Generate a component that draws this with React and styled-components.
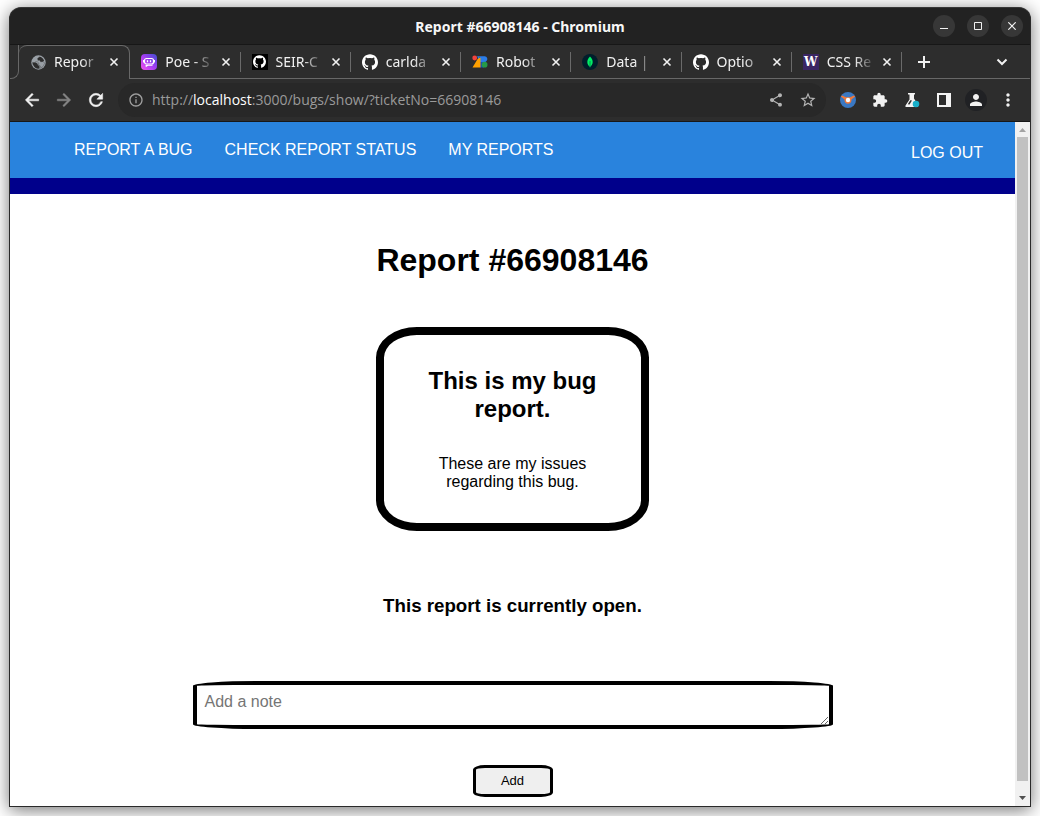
import React from "react";
import styled, { createGlobalStyle, css } from "styled-components";
import {
  MdArrowBack,
  MdArrowForward,
  MdRefresh,
  MdInfoOutline,
  MdShare,
  MdStarBorder,
  MdExtension,
  MdPerson,
  MdMoreVert,
} from "react-icons/md";
import { SiGithub } from "react-icons/si";

const GlobalStyle = createGlobalStyle`
  *, *::before, *::after { box-sizing: border-box; }
  body { margin: 0; background: #fff; }
  h1, h2, h3, p { margin: 0; }
  svg { display: block; flex: none; }
`;

const chromeFont = css`
  font-family: "Noto Sans", "Open Sans", sans-serif;
`;

const Desktop = styled.div`
  display: flex;
  min-height: 100vh;
  padding: 7px 9px 9px;
`;

const Window = styled.div`
  flex: 1;
  min-width: 0;
  display: flex;
  flex-direction: column;
  border: 1px solid #2a2a2a;
  border-top-color: #383838;
  border-radius: 12px 12px 0 0;
  background: #2d2d2d;
  box-shadow: 0 3px 18px rgba(0, 0, 0, 0.55);
  overflow: hidden;
`;

const TitleBar = styled.header`
  display: grid;
  grid-template-columns: 1fr auto 1fr;
  align-items: center;
  height: 37px;
  padding: 0 7px;
  background: #222;
  border-bottom: 1px solid #171717;
`;

const WindowTitle = styled.div`
  ${chromeFont}
  grid-column: 2;
  padding-top: 2px;
  font-size: 14px;
  font-weight: 700;
  line-height: 20px;
  color: #f7f7f7;
`;

const WindowControls = styled.div`
  display: flex;
  justify-content: flex-end;
  gap: 12px;
`;

const IconButton = styled.button`
  display: flex;
  align-items: center;
  justify-content: center;
  flex: none;
  width: ${(p) => p.$size || 32}px;
  height: ${(p) => p.$size || 32}px;
  padding: 0;
  border: 0;
  border-radius: 50%;
  background: ${(p) => p.$bg || "transparent"};
  color: ${(p) => p.$color || "#f1f1f1"};
`;

const TabStrip = styled.div`
  display: flex;
  height: 34px;
`;

const StripEdge = styled.div`
  flex: none;
  width: 9px;
  border-bottom: 1px solid #686868;
  border-right: 1px solid #686868;
  border-bottom-right-radius: 8px;
`;

const Tabs = styled.div`
  flex: 1;
  min-width: 0;
  display: flex;
`;

const Tab = styled.div`
  ${chromeFont}
  flex: 1 1 0;
  min-width: 0;
  display: flex;
  align-items: center;
  padding: 0 5px 0 11px;
  font-size: 14px;
  line-height: 20px;
  color: #f1f1f1;
  ${(p) =>
    p.$active
      ? css`
          border: solid #686868;
          border-width: 1px 1px 0 0;
          border-radius: 8px 8px 0 0;
          padding-bottom: 1px;
        `
      : css`
          border-bottom: 1px solid #686868;
          background: linear-gradient(#6a6a6a, #6a6a6a) no-repeat right center / 1px 20px;
        `}
`;

const TabTitle = styled.span`
  flex: 1;
  min-width: 0;
  margin: 0 0 0 8px;
  white-space: nowrap;
  mask-image: linear-gradient(to right, #000 55%, transparent 96%);
`;

const Favicon = styled.span`
  display: flex;
  align-items: center;
  justify-content: center;
  flex: none;
  width: 16px;
  height: 16px;
  background: ${(p) => p.$bg || "transparent"};
  color: #fff;
  font: 900 12px/16px "DejaVu Serif", serif;
`;

const StripTail = styled.div`
  flex: none;
  display: flex;
  align-items: center;
  justify-content: space-between;
  width: 128px;
  padding: 0 12px 0 6px;
  border-bottom: 1px solid #686868;
`;

const Toolbar = styled.div`
  display: flex;
  align-items: center;
  height: 43px;
  padding: 0 6px;
  border-bottom: 1px solid #171717;
`;

const NavIcons = styled.div`
  display: flex;

  path:not([fill="none"]) {
    stroke: currentColor;
    stroke-width: 0.6;
  }
`;

const Omnibox = styled.div`
  flex: 1;
  min-width: 0;
  display: flex;
  align-items: center;
  height: 34px;
  margin: 0 6px;
  padding: 0 2px;
  border-radius: 17px;
  background: #282828;
`;

const Address = styled.div`
  flex: 1;
  min-width: 0;
  overflow: hidden;
  white-space: nowrap;
  font-family: "Open Sans", "Noto Sans", sans-serif;
  font-size: 14px;
  line-height: 20px;
  color: #9a9a9a;
  outline: 0;

  span { color: #fff; }
`;

const Avatar = styled.span`
  display: flex;
  align-items: center;
  justify-content: center;
  width: 22px;
  height: 22px;
  border-radius: 50%;
  background: #202124;
`;

const Viewport = styled.div`
  flex: 1;
  display: flex;
  background: #fff;
`;

const Page = styled.div`
  flex: 1;
  min-width: 0;
  padding-bottom: 9px;
  font-family: "Liberation Sans", Arial, sans-serif;
  color: #000;
`;

const Nav = styled.nav`
  display: flex;
  justify-content: space-between;
  height: 72px;
  padding: 0 32px 0 64px;
  background: #2983dd;
  border-bottom: 16px solid #00008b;
`;

const NavLinks = styled.div`
  display: flex;
  align-items: center;
  gap: 32px;
  height: 56px;
`;

const NavLink = styled.a`
  font-size: 16px;
  line-height: 18px;
  color: #fff;
  text-decoration: none;
  white-space: nowrap;
`;

const LogOut = styled.div`
  display: flex;
  align-items: flex-end;
  height: 40px;
`;

const Main = styled.main`
  display: flex;
  flex-direction: column;
  align-items: center;
  padding-top: 48px;
  text-align: center;
`;

const Heading = styled.h1`
  margin-bottom: 48px;
  font-size: 32px;
  line-height: 37px;
`;

const Card = styled.article`
  display: grid;
  gap: 32px;
  width: 273px;
  margin-bottom: 64px;
  padding: 32px;
  border: 8px solid #000;
  border-radius: 15%;
`;

const CardTitle = styled.h2`
  font-size: 24px;
  line-height: 28px;
`;

const CardText = styled.p`
  padding: 0 16px;
  font-size: 16px;
  line-height: 18px;
`;

const Status = styled.h3`
  margin-bottom: 64px;
  line-height: 22px;
`;

const NoteForm = styled.form`
  display: flex;
  flex-direction: column;
  align-items: center;
  gap: 36px;
  width: 100%;
`;

const NoteField = styled.textarea`
  display: block;
  width: 640px;
  max-width: 100%;
  height: 48px;
  padding: 8px;
  border: 4px solid #000;
  border-radius: 10%;
  background: #fff;
  font: 16px/18px "Liberation Sans", Arial, sans-serif;
  overflow: auto;

  &::placeholder { color: #757575; }
`;

const AddButton = styled.button`
  width: 80px;
  height: 32px;
  padding: 0 0 2px;
  border: 3px solid #000;
  border-radius: 15%;
  background: #efefef;
  color: #000;
  font: 13px/15px "Liberation Sans", Arial, sans-serif;
`;

const ScrollTrack = styled.div`
  flex: none;
  display: flex;
  flex-direction: column;
  width: 15px;
  background: #f1f1f1;
`;

const ScrollArrow = styled.div`
  display: flex;
  align-items: center;
  justify-content: center;
  height: 15px;
  color: ${(p) => p.$color};
`;

const ScrollThumb = styled.div`
  flex: 1;
  margin: 0 2px;
  background: #c1c1c1;
`;

const ScrollEnd = styled.div`
  height: 25px;
  padding-top: 9px;
`;

const GlobeIcon = () => (
  <svg width="15" height="15" viewBox="0 0 15 15">
    <circle cx="7.500" cy="7.500" r="7.200" fill="#9aa0a6" />
    <path d="M8.500 1.800 6.800 3.200 7.500 5l1.700.3.600 1.500 2-.3 1.400.8.300 1.200-1.500 3-2 1.500-.5-2-2-1.200.300-1.800L6 6.500 4.300 6.800l-1 1.200-1.800-.5.2 2 2.300.5 1.200 1.500-.2 1.200 1.500.6L8 12.500l1.500.5L8.500 14" fill="none" stroke="#2d2d2d" strokeWidth=".3" />
    <path d="M8.800 1.700c2.200.5 3.800 2.100 4.300 4.100l-1.600.9-2 .1-.7-1.500-2 .1-.3-2zM1.600 7.400l3.200.2 1.800 1.200.3 1.500 1.600.5-.2 2.800c-3.500.4-6.400-2.200-6.700-6.200z" fill="#2d2d2d" />
  </svg>
);

const PoeIcon = () => (
  <svg width="16" height="16" viewBox="0 0 16 16">
    <defs>
      <linearGradient id="poe" x1="0" y1="1" x2="1" y2="0">
        <stop offset="0" stopColor="#f655f0" />
        <stop offset=".5" stopColor="#a43cf2" />
        <stop offset="1" stopColor="#3f4fd0" />
      </linearGradient>
    </defs>
    <rect width="16" height="16" rx="4" fill="url(#poe)" />
    <rect x="3.500" y="4.500" width="9" height="5.500" rx="2" fill="none" stroke="#fff" strokeWidth="1.200" />
    <path d="M2.500 6v2.500M13.500 6v2.500" stroke="#fff" strokeWidth="1" />
    <path d="M4.500 10.800h7v1H7l-2.200 1.500z" fill="#fff" />
    <path d="M6.500 6.300v1.900M9.500 6.300v1.900" stroke="#fff" strokeWidth="1.300" />
  </svg>
);

const RoboticsIcon = () => (
  <svg width="16" height="16" viewBox="0 0 16 16">
    <path d="M7.500 2.300h5a2.800 2.800 0 0 1 1.500 5.200L12 9H8z" fill="#2b7de9" />
    <path d="M8 8h4v5.500H8z" fill="#1b4fb4" />
    <path d="M.5 13.500 6.500 3.500 8.500 4v9.500z" fill="#ffa000" />
    <path d="M5 2.300h3L6.500 5z" fill="#2b7de9" />
    <circle cx="2.700" cy="4" r="2.400" fill="#f4433c" />
    <circle cx="12.600" cy="10.700" r="2.900" fill="#249a48" />
  </svg>
);

const MongoIcon = () => (
  <svg width="16" height="16" viewBox="0 0 16 16">
    <circle cx="8" cy="8" r="8" fill="#001e2b" />
    <path d="M8 2.500c1.600 1.800 2.700 3.400 2.700 5.400S9.600 11.600 8 13c-1.600-1.400-2.700-3.100-2.700-5.100S6.400 4.300 8 2.500z" fill="#00ed64" />
    <path d="M8 7v6.500" stroke="#067a48" strokeWidth=".8" />
  </svg>
);

const CloseIcon = () => (
  <svg width="10" height="10" viewBox="0 0 10 10" stroke="currentColor" strokeWidth="1.600">
    <path d="M1.500 1.500l7 7M8.500 1.500l-7 7" />
  </svg>
);

const PlusIcon = () => (
  <svg width="12" height="12" viewBox="0 0 12 12" stroke="currentColor" strokeWidth="2">
    <path d="M6 0v12M0 6h12" />
  </svg>
);

const ChevronIcon = () => (
  <svg width="12" height="8" viewBox="0 0 12 8" fill="none" stroke="currentColor" strokeWidth="2">
    <path d="M1.500 1.500 6 6l4.500-4.500" />
  </svg>
);

const MinimizeIcon = () => (
  <svg width="8" height="8" viewBox="0 0 8 8">
    <path d="M0 6h8v1H0z" fill="currentColor" />
  </svg>
);

const MaximizeIcon = () => (
  <svg width="8" height="8" viewBox="0 0 8 8">
    <path d="M.5.5h7v7h-7z" fill="none" stroke="currentColor" />
  </svg>
);

const WindowCloseIcon = () => (
  <svg width="8" height="8" viewBox="0 0 8 8" stroke="currentColor" strokeWidth="1.200">
    <path d="M.3.3l7.400 7.400M7.700.3.300 7.700" />
  </svg>
);

const CompassIcon = () => (
  <svg width="16" height="16" viewBox="0 0 16 16">
    <circle cx="8" cy="8" r="8" fill="#3a78c3" />
    <path d="M.8 4.600 2 3.400l4 1.800h4l4-1.800 1.200 1.200-3.800 2.800a3.500 3.500 0 1 1-6.800 0z" fill="#f0793a" />
    <circle cx="8" cy="8" r="2.200" fill="#fff" />
  </svg>
);

const FlaskIcon = () => (
  <svg width="16" height="16" viewBox="0 0 16 16">
    <path d="M4 1h7v1.500h-1v4l4 6.500v2H1.500v-1.500L5.500 7.500v-5H4z" fill="#f4f4f4" />
    <path d="M6.300 8.300 8 8.500 5.500 12.500 3.800 12.300z" fill="#2d2d2d" />
    <circle cx="12" cy="12" r="3.300" fill="#18afc9" />
  </svg>
);

const SidePanelIcon = () => (
  <svg width="14" height="14" viewBox="0 0 14 14">
    <path d="M0 0h14v14H0zM2 2v10h7V2z" fill="#f4f4f4" fillRule="evenodd" />
  </svg>
);

const tabs = [
  { title: "Repor", active: true, icon: <Favicon><GlobeIcon /></Favicon> },
  { title: "Poe - S", icon: <Favicon><PoeIcon /></Favicon> },
  { title: "SEIR-C", icon: <Favicon $bg="#000"><SiGithub size={13} /></Favicon> },
  { title: "carlda", icon: <Favicon><SiGithub size={16} /></Favicon> },
  { title: "Robot", icon: <Favicon><RoboticsIcon /></Favicon> },
  { title: "Data |", icon: <Favicon><MongoIcon /></Favicon> },
  { title: "Optio", icon: <Favicon><SiGithub size={16} /></Favicon> },
  { title: "CSS Re", icon: <Favicon $bg="#3a2663">W</Favicon> },
];

export default function App() {
  return (
    <>
      <GlobalStyle />
      <Desktop>
        <Window>
          <TitleBar>
            <WindowTitle>Report #66908146 - Chromium</WindowTitle>
            <WindowControls>
              <IconButton $size={22} $bg="#373737" aria-label="Minimize"><MinimizeIcon /></IconButton>
              <IconButton $size={22} $bg="#373737" aria-label="Maximize"><MaximizeIcon /></IconButton>
              <IconButton $size={22} $bg="#373737" aria-label="Close window"><WindowCloseIcon /></IconButton>
            </WindowControls>
          </TitleBar>

          <TabStrip>
            <StripEdge />
            <Tabs>
              {tabs.map((tab) => (
                <Tab key={tab.title} $active={tab.active}>
                  {tab.icon}
                  <TabTitle>{tab.title}</TabTitle>
                  <IconButton $size={20} aria-label="Close tab"><CloseIcon /></IconButton>
                </Tab>
              ))}
            </Tabs>
            <StripTail>
              <IconButton aria-label="New tab"><PlusIcon /></IconButton>
              <IconButton aria-label="Search tabs"><ChevronIcon /></IconButton>
            </StripTail>
          </TabStrip>

          <Toolbar>
            <NavIcons>
              <IconButton aria-label="Back"><MdArrowBack size={20} /></IconButton>
              <IconButton $color="#858585" aria-label="Forward"><MdArrowForward size={20} /></IconButton>
              <IconButton aria-label="Reload"><MdRefresh size={20} /></IconButton>
            </NavIcons>
            <Omnibox>
              <IconButton $color="#a0a0a0" aria-label="Site information"><MdInfoOutline size={16} /></IconButton>
              <Address role="textbox" aria-label="Address" contentEditable suppressContentEditableWarning spellCheck={false}>
                http://<span>localhost</span>:3000/bugs/show/?ticketNo=66908146
              </Address>
              <IconButton $color="#b4b4b4" aria-label="Share"><MdShare size={16} /></IconButton>
              <IconButton $color="#b4b4b4" aria-label="Bookmark"><MdStarBorder size={18} /></IconButton>
            </Omnibox>
            <IconButton aria-label="Compass extension"><CompassIcon /></IconButton>
            <IconButton aria-label="Extensions"><MdExtension size={16} /></IconButton>
            <IconButton aria-label="Experiments"><FlaskIcon /></IconButton>
            <IconButton aria-label="Side panel"><SidePanelIcon /></IconButton>
            <IconButton aria-label="Profile">
              <Avatar><MdPerson size={18} /></Avatar>
            </IconButton>
            <IconButton aria-label="Menu"><MdMoreVert size={20} /></IconButton>
          </Toolbar>

          <Viewport>
            <Page>
              <Nav>
                <NavLinks>
                  <NavLink href="#report">REPORT A BUG</NavLink>
                  <NavLink href="#status">CHECK REPORT STATUS</NavLink>
                  <NavLink href="#mine">MY REPORTS</NavLink>
                </NavLinks>
                <LogOut>
                  <NavLink href="#logout">LOG OUT</NavLink>
                </LogOut>
              </Nav>
              <Main>
                <Heading>Report #66908146</Heading>
                <Card>
                  <CardTitle>This is my bug report.</CardTitle>
                  <CardText>These are my issues regarding this bug.</CardText>
                </Card>
                <Status>This report is currently open.</Status>
                <NoteForm onSubmit={(e) => e.preventDefault()}>
                  <NoteField aria-label="Add a note" placeholder="Add a note" />
                  <AddButton>Add</AddButton>
                </NoteForm>
              </Main>
            </Page>
            <ScrollTrack>
              <ScrollArrow $color="#a3a3a3">
                <svg width="7" height="4" viewBox="0 0 7 4"><path d="M0 4 3.500 0 7 4z" fill="currentColor" /></svg>
              </ScrollArrow>
              <ScrollThumb />
              <ScrollEnd>
                <ScrollArrow $color="#505050">
                  <svg width="7" height="4" viewBox="0 0 7 4"><path d="M0 0h7L3.500 4z" fill="currentColor" /></svg>
                </ScrollArrow>
              </ScrollEnd>
            </ScrollTrack>
          </Viewport>
        </Window>
      </Desktop>
    </>
  );
}
